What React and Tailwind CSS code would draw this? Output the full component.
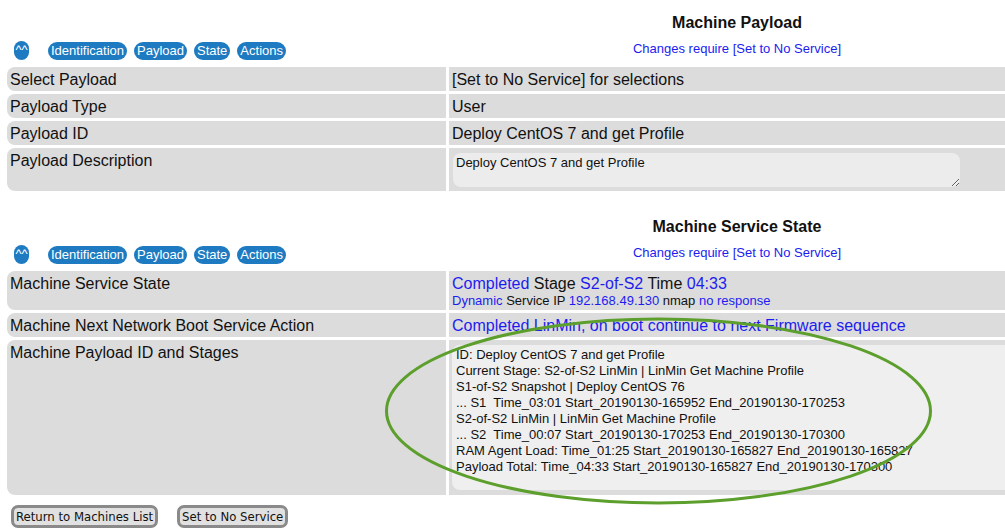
import React from 'react';

const Pill = ({ children, className = '' }) => (
    <span className={`inline-block h-[18px] leading-[18px] rounded-full bg-[#1f7bc1] text-white text-[13px] px-[3px] ${className}`}>
        {children}
    </span>
);

const SectionHeader = ({ title }) => (
    <div className="flex gap-[3px] h-[64px]">
        <div className="w-[439px] flex items-end pb-[4px] pl-[7px] gap-[7px]">
            <Pill className="w-[15px] h-[19px] !px-0 text-center text-[10px] leading-[16px] mr-[12px]">^^</Pill>
            <Pill>Identification</Pill>
            <Pill>Payload</Pill>
            <Pill>State</Pill>
            <Pill>Actions</Pill>
        </div>
        <div className="flex-1 flex flex-col items-center pt-[13px]">
            <h2 className="text-[16px] leading-[20px] font-bold text-[#111]">{title}</h2>
            <span className="mt-[8px] text-[13px] leading-[15px] text-[#1c1cf0]">Changes require [Set to No Service]</span>
        </div>
    </div>
);

const Row = ({ label, height, children, rightClass = 'pl-[3px] pt-[4px]' }) => (
    <div className={`flex gap-[3px] ${height}`}>
        <div className="w-[439px] bg-[#dcdcdc] rounded-l-[8px] pl-[3px] pt-[4px] text-[16px] leading-[18px]">
            {label}
        </div>
        <div className={`flex-1 bg-[#dcdcdc] text-[16px] leading-[18px] ${rightClass}`}>
            {children}
        </div>
    </div>
);

const stages = `ID: Deploy CentOS 7 and get Profile
Current Stage: S2-of-S2 LinMin | LinMin Get Machine Profile
S1-of-S2 Snapshot | Deploy CentOS 76
... S1  Time_03:01 Start_20190130-165952 End_20190130-170253
S2-of-S2 LinMin | LinMin Get Machine Profile
... S2  Time_00:07 Start_20190130-170253 End_20190130-170300
RAM Agent Load: Time_01:25 Start_20190130-165827 End_20190130-165827
Payload Total: Time_04:33 Start_20190130-165827 End_20190130-170300`;

export default function App() {
    const blue = 'text-[#1c1cf0]';

    return (
        <div className="relative w-[1005px] h-[532px] overflow-hidden bg-white text-[#111] font-['Liberation_Sans',Arial,sans-serif]">
            <div className="w-[1025px] pl-[7px]">
                {/* Machine Payload */}
                <div className="flex flex-col gap-[3px]">
                    <SectionHeader title="Machine Payload" />
                    <Row label="Select Payload" height="h-[24px]">[Set to No Service] for selections</Row>
                    <Row label="Payload Type" height="h-[24px]">User</Row>
                    <Row label="Payload ID" height="h-[24px]">Deploy CentOS 7 and get Profile</Row>
                    <Row label="Payload Description" height="h-[43px]" rightClass="pl-[4px] pt-[5px]">
                        <textarea
                            readOnly
                            value="Deploy CentOS 7 and get Profile"
                            className="block w-[507px] h-[34px] bg-[#ececec] rounded-[8px] border-0 outline-none px-[3px] py-[2px] text-[13px] leading-[16px] text-[#111] font-['Liberation_Sans',Arial,sans-serif] resize"
                        />
                    </Row>
                </div>

                {/* Machine Service State */}
                <div className="flex flex-col gap-[3px] mt-[13px]">
                    <SectionHeader title="Machine Service State" />
                    <Row label="Machine Service State" height="h-[39px]">
                        <div>
                            <span className={blue}>Completed</span> Stage <span className={blue}>S2-of-S2</span> Time <span className={blue}>04:33</span>
                        </div>
                        <div className="text-[13px] leading-[15px]">
                            <span className={blue}>Dynamic</span> Service IP <span className={blue}>192.168.49.130</span> nmap <span className={blue}>no response</span>
                        </div>
                    </Row>
                    <Row label="Machine Next Network Boot Service Action" height="h-[24px]">
                        <span className={blue}>Completed LinMin, on boot continue to next Firmware sequence</span>
                    </Row>
                    <Row label="Machine Payload ID and Stages" height="h-[155px]" rightClass="pl-[3px] py-[5px]">
                        <div className="h-full bg-[#efefef] rounded-tl-[8px] rounded-bl-[8px] pl-[4px] pt-[2px] text-[13px] leading-[16px] whitespace-pre">
                            {stages}
                        </div>
                    </Row>
                </div>

                {/* Actions */}
                <div className="flex gap-[19px] mt-[10px] pl-[4px] font-['DejaVu_Sans_Condensed','DejaVu_Sans',sans-serif] text-[13px]">
                    <button className="h-[23px] px-[2px] bg-[#e1e1e1] border-[3px] border-[#8a8a8a] rounded-[7px] leading-[17px] text-[#111]">
                        Return to Machines List
                    </button>
                    <button className="h-[23px] px-[2px] bg-[#e1e1e1] border-[3px] border-[#8a8a8a] rounded-[7px] leading-[17px] text-[#111]">
                        Set to No Service
                    </button>
                </div>
            </div>

            {/* annotation ellipse */}
            <svg className="absolute left-[383px] top-[316px] pointer-events-none" width="551" height="190" viewBox="0 0 551 190">
                <ellipse cx="275.5" cy="95" rx="272" ry="92" fill="none" stroke="#5c9f2c" strokeWidth="3" />
            </svg>
        </div>
    );
}
